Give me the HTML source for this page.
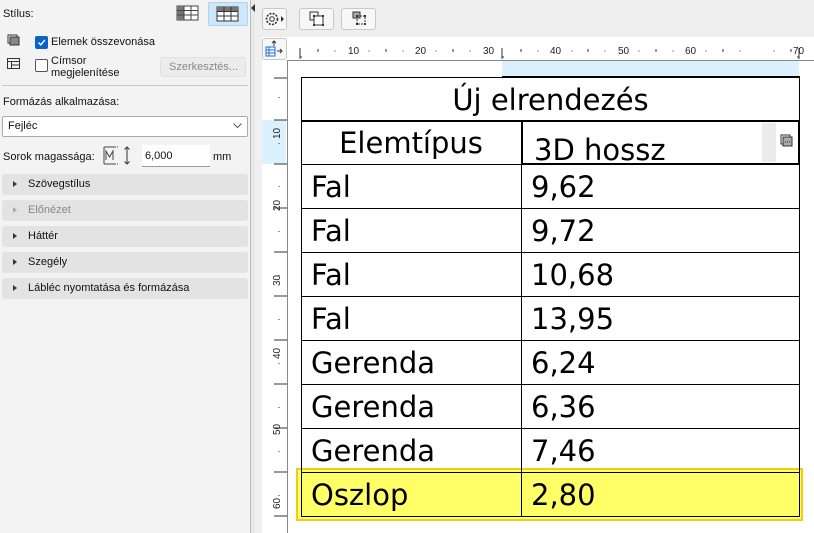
<!DOCTYPE html>
<html><head><meta charset="utf-8"><style>
*{box-sizing:border-box;margin:0;padding:0}
body{width:814px;height:533px;overflow:hidden;background:#f0f0f0;font-family:"Liberation Sans","DejaVu Sans",sans-serif;position:relative;font-size:11px;color:#111}
.a{position:absolute}
.sec{position:absolute;left:2px;width:246px;height:21px;background:#e3e3e3;border-radius:3px;font-size:11px;padding-left:26px;line-height:21px;color:#111}
.sec:before{content:"";position:absolute;left:11px;top:7px;border-left:4px solid #333;border-top:3.5px solid transparent;border-bottom:3.5px solid transparent}
.sec.dis{color:#888}.sec.dis:before{border-left-color:#aaa}
.cell{position:absolute;font-family:"DejaVu Sans","Liberation Sans",sans-serif;font-size:29px;color:#000;line-height:44px}
.hl{position:absolute;left:301px;width:499px;height:1px;background:#000}
</style></head><body>
<div class="a" style="left:0;top:0;width:250px;height:533px;background:#f3f3f3"></div>
<div class="a" style="left:250px;top:0;width:5px;height:533px;background:#e8e8e8;border-left:1px solid #bbb"></div>
<div class="a" style="left:251px;top:4px;border-right:4px solid #333;border-top:4px solid transparent;border-bottom:4px solid transparent"></div>
<div class="a" style="left:3px;top:8px;font-size:11px">Stílus:</div>
<svg class="a" style="left:176px;top:5px" width="24" height="16"><rect x="1" y="1" width="21" height="14" fill="#fff" stroke="#444"/><rect x="1" y="1" width="7" height="14" fill="#777"/><path d="M1 5.5H22M1 10H22M8 1V15M15 1V15" stroke="#444"/></svg>
<div class="a" style="left:208px;top:2px;width:40px;height:24px;background:#cde8fb;border:1px solid #a9d2f3;border-radius:2px"></div>
<svg class="a" style="left:216px;top:6px" width="24" height="16"><rect x="1" y="1" width="21" height="14" fill="#fff" stroke="#333"/><rect x="1" y="1" width="21" height="4" fill="#777"/><path d="M1 5.5H22M1 10H22M8 1V15M15 1V15" stroke="#333"/></svg>
<svg class="a" style="left:7px;top:34px" width="14" height="13"><rect x="1" y="1" width="9" height="8" fill="none" stroke="#333"/><rect x="3" y="3" width="9" height="8" fill="#888" stroke="#333"/></svg>
<div class="a" style="left:35px;top:36px;width:13px;height:13px;background:#0a64c8;border-radius:2px"></div>
<svg class="a" style="left:37px;top:38px" width="9" height="9"><path d="M1.5 4.5L3.8 6.8L7.8 2" stroke="#fff" stroke-width="1.4" fill="none"/></svg>
<div class="a" style="left:51px;top:36px;font-size:11px">Elemek összevonása</div>
<svg class="a" style="left:7px;top:58px" width="13" height="11"><rect x="0.5" y="0.5" width="12" height="10" fill="none" stroke="#333"/><path d="M0.5 3.5H12.5M4.5 3.5V10.5M4.5 7H12.5" stroke="#333"/></svg>
<div class="a" style="left:35px;top:59px;width:13px;height:13px;border:1px solid #555;border-radius:2px;background:#fff"></div>
<div class="a" style="left:51px;top:55px;font-size:11px;line-height:12px">Címsor<br>megjelenítése</div>
<div class="a" style="left:160px;top:57px;width:86px;height:20px;background:#ececec;border:1px solid #e0e0e0;border-radius:3px;font-size:11px;color:#888;line-height:18px;padding-left:8px">Szerkesztés...</div>
<div class="a" style="left:2px;top:85px;width:246px;height:1px;background:#c8c8c8"></div>
<div class="a" style="left:3px;top:96px;font-size:11px">Formázás alkalmazása:</div>
<div class="a" style="left:2px;top:116px;width:246px;height:21px;background:#fff;border:1px solid #aaa;border-radius:2px;font-size:11px;line-height:19px;padding-left:5px">Fejléc</div>
<svg class="a" style="left:233px;top:123px" width="9" height="6"><path d="M0.5 0.5L4.5 4.5L8.5 0.5" stroke="#555" fill="none"/></svg>
<div class="a" style="left:3px;top:151px;font-size:11px">Sorok magassága:</div>
<svg class="a" style="left:103px;top:146px" width="30" height="20"><path d="M1 1H12M1 18H12M1 1V18M3 14V5L6.5 11L10 5V14" stroke="#444" fill="none"/><path d="M12 1H16M12 18H16" stroke="#444" stroke-dasharray="1 1"/><path d="M24 1V18M21.5 3.5L24 1L26.5 3.5M21.5 15.5L24 18L26.5 15.5" stroke="#333" fill="none"/></svg>
<div class="a" style="left:142px;top:145px;width:68px;height:22px;background:#fff;border-bottom:1px solid #999;font-size:11px;line-height:22px;padding-left:3px">6,000</div>
<div class="a" style="left:213px;top:151px;font-size:11px">mm</div>
<div class="sec" style="top:174px">Szövegstílus</div>
<div class="sec dis" style="top:200px">Előnézet</div>
<div class="sec" style="top:226px">Háttér</div>
<div class="sec" style="top:252px">Szegély</div>
<div class="sec" style="top:278px">Lábléc nyomtatása és formázása</div>
<div class="a" style="left:255px;top:0;width:559px;height:37px;background:#eeeeee"></div>
<div class="a" style="left:262px;top:8px;width:25px;height:22px;border:1px solid #c8c8c8;border-radius:3px;background:#f7f7f7"></div>
<svg class="a" style="left:264px;top:11px" width="22" height="16"><circle cx="8" cy="8" r="5.5" fill="none" stroke="#333" stroke-dasharray="2 1.3" stroke-width="1.6"/><circle cx="8" cy="8" r="2.3" fill="none" stroke="#333"/><path d="M17 5L20 8L17 11Z" fill="#333"/></svg>
<div class="a" style="left:299px;top:8px;width:35px;height:22px;border:1px solid #c8c8c8;border-radius:3px;background:#f7f7f7"></div>
<svg class="a" style="left:309px;top:11px" width="16" height="16"><path d="M1 1H9V9H1Z" fill="none" stroke="#333"/><rect x="5" y="5" width="9" height="9" fill="#fff" stroke="#333"/><rect x="4" y="4" width="2" height="2" fill="#333"/><rect x="13" y="4" width="2" height="2" fill="#333"/><rect x="4" y="13" width="2" height="2" fill="#333"/><rect x="13" y="13" width="2" height="2" fill="#333"/></svg>
<div class="a" style="left:341px;top:8px;width:35px;height:22px;border:1px solid #c8c8c8;border-radius:3px;background:#f7f7f7"></div>
<svg class="a" style="left:351px;top:10px" width="17" height="17"><rect x="2" y="2" width="7" height="6" fill="#aaa" stroke="#333"/><rect x="6" y="6" width="8" height="8" fill="none" stroke="#333" stroke-dasharray="2 1"/><rect x="5" y="5" width="2" height="2" fill="#333"/><rect x="13" y="5" width="2" height="2" fill="#333"/><rect x="5" y="13" width="2" height="2" fill="#333"/><rect x="13" y="13" width="2" height="2" fill="#333"/></svg>
<div class="a" style="left:255px;top:37px;width:559px;height:496px;background:#f0f0f0"></div>
<div class="a" style="left:262px;top:37px;width:552px;height:24px;background:#fff"></div>
<div class="a" style="left:262px;top:38px;width:25px;height:22px;border:1px solid #c8c8c8;border-radius:3px;background:#f7f7f7"></div>
<svg class="a" style="left:264px;top:40px" width="22" height="18"><path d="M10 1V6M8 3L10 1L12 3" stroke="#333" fill="none"/><rect x="2" y="7" width="9" height="9" fill="#fff" stroke="#1a6fd6"/><path d="M2 10H11M2 13H11M5 7V16" stroke="#1a6fd6"/><path d="M13 11H18M16 9L18 11L16 13" stroke="#333" fill="none"/></svg>
<div class="a" style="left:262px;top:61px;width:25px;height:472px;background:#fff"></div>
<div class="a" style="left:287px;top:60px;width:527px;height:1px;background:#888"></div>
<div class="a" style="left:287px;top:60px;width:1px;height:473px;background:#888"></div>
<div class="a" style="left:288px;top:61px;width:526px;height:472px;background:#fff"></div>
<svg class="a" style="left:288px;top:43px" width="526" height="17">
<g stroke="#333"><path d="M12 5V16M12 14H14M214 5V16M214 14H216M511 5V16M509 14H511"/>
<path d="M30 6V9M98 6V9M165 6V9M233 6V9M300 6V9M368 6V9M435 6V9M503 6V9"/>
<path d="M47 7.5V8.5M81 7.5V8.5M115 7.5V8.5M148 7.5V8.5M182 7.5V8.5M250 7.5V8.5M284 7.5V8.5M317 7.5V8.5M351 7.5V8.5M385 7.5V8.5M418 7.5V8.5M452 7.5V8.5M486 7.5V8.5"/></g>
<g font-size="10" fill="#222" font-family="Liberation Sans"><text x="60" y="11">10</text><text x="127" y="11">20</text><text x="195" y="11">30</text><text x="262" y="11">40</text><text x="330" y="11">50</text><text x="397" y="11">60</text><text x="505" y="11">70</text></g></svg>
<div class="a" style="left:262px;top:120px;width:24px;height:44px;background:#dbf1fd"></div>
<svg class="a" style="left:262px;top:61px" width="26" height="472">
<g stroke="#333"><path d="M12 17H25M12 59H25M12 103H25M12 147H25M12 191H25M12 235H25M12 279H25M12 323H25M12 367H25M12 411H25M12 455H25"/>
<path d="M17 36V37M17 82V83M17 125V126M17 170V171M17 214V215M17 258V259M17 302V303M17 346V347M17 390V391M17 434V435"/></g>
<g font-size="10" fill="#222" font-family="Liberation Sans"><text transform="translate(18,78) rotate(-90)">10</text><text transform="translate(18,150) rotate(-90)">20</text><text transform="translate(18,225) rotate(-90)">30</text><text transform="translate(18,298) rotate(-90)">40</text><text transform="translate(18,374) rotate(-90)">50</text><text transform="translate(18,448) rotate(-90)">60</text></g></svg>
<div class="a" style="left:502px;top:61px;width:297px;height:15px;background:#dbf1fd"></div>
<div class="a" style="left:296px;top:468px;width:507px;height:53px;background:#ffff66;border:2px solid #f5cc10"></div>
<div class="a" style="left:301px;top:77px;width:499px;height:1px;background:#000"></div>
<div class="a" style="left:502px;top:76px;width:298px;height:2px;background:#000"></div>
<div class="a" style="left:301px;top:77px;width:1px;height:440px;background:#000"></div>
<div class="a" style="left:799px;top:77px;width:1px;height:440px;background:#000"></div>
<div class="a" style="left:521px;top:120px;width:1px;height:397px;background:#000"></div>
<div class="hl" style="top:120px;height:2px"></div>
<div class="a" style="left:521px;top:120px;width:279px;height:45px;border:2px solid #000"></div>
<div class="hl" style="top:164px"></div><div class="hl" style="top:208px"></div><div class="hl" style="top:252px"></div><div class="hl" style="top:296px"></div><div class="hl" style="top:340px"></div><div class="hl" style="top:384px"></div><div class="hl" style="top:428px"></div><div class="hl" style="top:472px"></div><div class="hl" style="top:516px"></div>
<div class="a" style="left:762px;top:123px;width:14px;height:39px;background:#ececec"></div>
<svg class="a" style="left:780px;top:134px" width="14" height="14"><rect x="1" y="1" width="9" height="9" fill="none" stroke="#333"/><rect x="3" y="3" width="9" height="9" fill="#aaa" stroke="#333"/><path d="M5 8H10" stroke="#333" stroke-dasharray="1 1"/></svg>
<div class="cell" style="left:301px;width:499px;top:78px;text-align:center;line-height:44px">Új elrendezés</div>
<div class="cell" style="left:301px;width:220px;top:121px;text-align:center">Elemtípus</div>
<div class="cell" style="left:534px;top:128px">3D hossz</div>
<div class="cell" style="left:311px;top:165px">Fal</div><div class="cell" style="left:531px;top:165px">9,62</div>
<div class="cell" style="left:311px;top:209px">Fal</div><div class="cell" style="left:531px;top:209px">9,72</div>
<div class="cell" style="left:311px;top:253px">Fal</div><div class="cell" style="left:531px;top:253px">10,68</div>
<div class="cell" style="left:311px;top:297px">Fal</div><div class="cell" style="left:531px;top:297px">13,95</div>
<div class="cell" style="left:311px;top:341px">Gerenda</div><div class="cell" style="left:531px;top:341px">6,24</div>
<div class="cell" style="left:311px;top:385px">Gerenda</div><div class="cell" style="left:531px;top:385px">6,36</div>
<div class="cell" style="left:311px;top:429px">Gerenda</div><div class="cell" style="left:531px;top:429px">7,46</div>
<div class="cell" style="left:311px;top:473px">Oszlop</div><div class="cell" style="left:531px;top:473px">2,80</div>
</body></html>
